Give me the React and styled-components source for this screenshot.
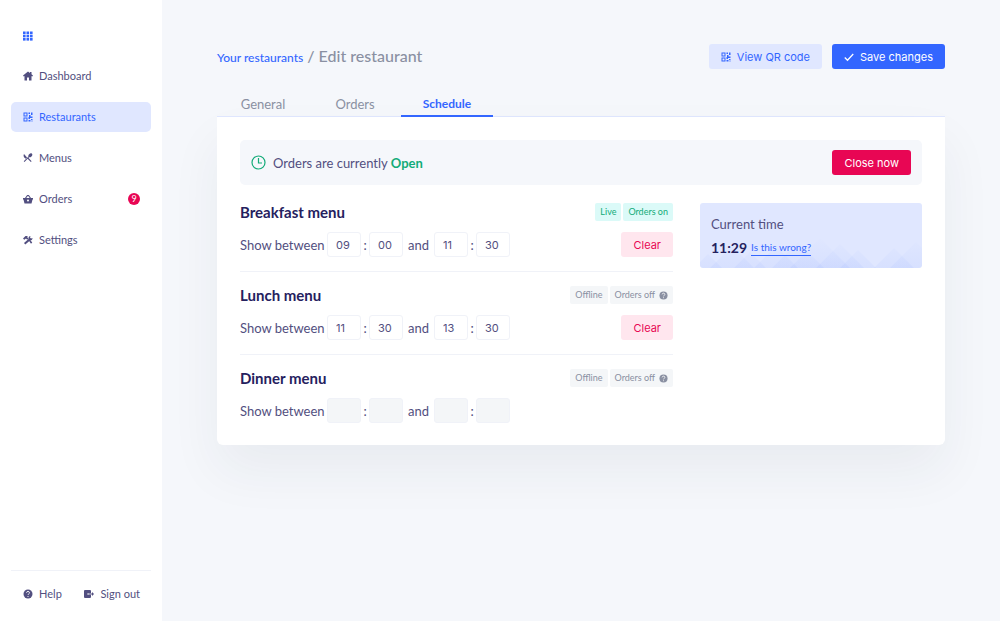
import React, { useState } from "react";
import styled, { createGlobalStyle, css } from "styled-components";

const color = {
  blue: "#3366ff",
  blueSoft: "#e0e7ff",
  ink: "#25215e",
  text: "#524f80",
  grey: "#8a90a2",
  line: "#f0f2f8",
  page: "#f5f7fb",
  red: "#e80654",
  redSoft: "#ffe6ee",
  green: "#12ab78",
  greenSoft: "#dbfaf8",
  off: "#f4f6f8",
};

const body = `Lato, "Noto Sans", sans-serif`;
const ui = `Inter, "Liberation Sans", sans-serif`;

const GlobalStyle = createGlobalStyle`
  *, *::before, *::after { box-sizing: border-box; }
  body { margin: 0; background: ${color.page}; color: ${color.text}; font: 13px/20px ${body}; }
  h1, h2, p { margin: 0; }
  a { color: inherit; text-decoration: none; }
  button, input { font: inherit; color: inherit; margin: 0; }
  svg { display: block; flex: none; }
`;

const Shell = styled.div`
  display: flex;
  min-height: 100vh;
`;

const Sidebar = styled.aside`
  display: flex;
  flex-direction: column;
  flex: none;
  width: 162px;
  padding: 20px 11px 12px;
  background: #fff;
  font-size: 11px;
`;

const NavLink = styled.a`
  display: flex;
  align-items: center;
  gap: 6px;
  height: 30px;
  padding: 0 11px 0 12px;
  border-radius: 5px;
  white-space: nowrap;
  color: ${(p) => (p.$active ? color.blue : color.text)};
  background: ${(p) => (p.$active ? color.blueSoft : "transparent")};
`;

const Logo = styled.a`
  display: flex;
  padding: 11px 12px;
  color: ${color.blue};
`;

const Nav = styled.nav`
  display: flex;
  flex-direction: column;
  gap: 11px;
  margin-top: 9px;
`;

const Count = styled.span`
  margin-left: auto;
  width: 12px;
  height: 12px;
  border-radius: 50%;
  background: ${color.red};
  color: #fff;
  font-size: 9px;
  line-height: 12px;
  text-align: center;
`;

const SideFooter = styled.div`
  display: flex;
  justify-content: space-between;
  margin-top: auto;
  padding-top: 8px;
  border-top: 1px solid ${color.line};

  ${NavLink} + ${NavLink} { padding-left: 0; }
`;

const Main = styled.main`
  flex: 1;
  min-width: 0;
  padding: 44px 55px;
`;

const TopBar = styled.header`
  display: flex;
  align-items: center;
  justify-content: space-between;
`;

const Crumbs = styled.h1`
  font-size: 16px;
  font-weight: 500;
  color: ${color.grey};
`;

const CrumbLink = styled.a`
  font-size: 12px;
  color: ${color.blue};
`;

const Actions = styled.div`
  display: flex;
  gap: 10px;
`;

const tones = {
  primary: css`background: ${color.blue}; color: #fff;`,
  soft: css`background: ${color.blueSoft}; color: ${color.blue};`,
  danger: css`background: ${color.red}; color: #fff;`,
  dangerSoft: css`background: ${color.redSoft}; color: ${color.red};`,
};

const Button = styled.button`
  display: flex;
  align-items: center;
  gap: 6px;
  height: 25px;
  padding: 0 12px;
  border: 0;
  border-radius: 3px;
  font: 11px/16px ${ui};
  white-space: nowrap;
  cursor: pointer;
  ${(p) => tones[p.$tone]}
`;

const Tabs = styled.div`
  display: flex;
  margin-top: 22px;
  border-bottom: 1px solid ${color.blueSoft};
`;

const Tab = styled.button`
  width: 92px;
  height: 26px;
  margin-bottom: -1px;
  padding: 2px 0 0;
  border: 0;
  border-bottom: 2px solid ${(p) => (p.$active ? color.blue : "transparent")};
  background: none;
  color: ${(p) => (p.$active ? color.blue : color.grey)};
  font-size: ${(p) => (p.$active ? 12 : 13)}px;
  font-weight: ${(p) => (p.$active ? 700 : 400)};
  cursor: pointer;
`;

const Card = styled.section`
  padding: 23px 23px 22px;
  background: #fff;
  border-radius: 0 0 6px 6px;
  box-shadow: 0 26px 52px rgba(40, 50, 60, 0.06);
`;

const Notice = styled.div`
  display: flex;
  align-items: center;
  gap: 7px;
  padding: 10px 11px;
  border-radius: 5px;
  background: ${color.page};
  color: ${color.text};

  ${Button} { margin-left: auto; }
`;

const Open = styled.strong`
  color: ${color.green};
`;

const Columns = styled.div`
  display: grid;
  grid-template-columns: minmax(0, 433fr) minmax(0, 222fr);
  gap: 27px;
  align-items: start;
  margin-top: 18px;
`;

const Menu = styled.section`
  & + & {
    margin-top: 14px;
    padding-top: 14px;
    border-top: 1px solid ${color.line};
  }
`;

const Row = styled.div`
  display: flex;
  align-items: center;
  justify-content: space-between;
  & + & { margin-top: 11px; }
`;

const MenuTitle = styled.h2`
  font-size: 15px;
  line-height: 18px;
  font-weight: 700;
  color: ${color.ink};
`;

const Tags = styled.div`
  display: flex;
  gap: 2px;
`;

const Tag = styled.span`
  display: flex;
  align-items: center;
  gap: 4px;
  height: 18px;
  padding: 0 5px;
  border-radius: 2px;
  font-size: 9px;
  background: ${(p) => (p.$on ? color.greenSoft : color.off)};
  color: ${(p) => (p.$on ? color.green : color.grey)};
`;

const Times = styled.div`
  display: flex;
  align-items: center;
  height: 25px;
`;

const Word = styled.span`
  width: ${(p) => p.$width}px;
  text-align: ${(p) => p.$align || "center"};
`;

const TimeInput = styled.input`
  width: 34px;
  height: 25px;
  padding: 0 8px;
  border: 1px solid ${color.line};
  border-radius: 3px;
  background: #fff;
  font: 11px/16px ${ui};
  &:disabled { background: ${color.off}; }
`;

const Clock = styled.aside`
  position: relative;
  height: 65px;
  padding: 11px;
  border-radius: 3px;
  overflow: hidden;
  background: ${color.blueSoft};
`;

const Pattern = styled.svg`
  position: absolute;
  left: 0;
  bottom: 0;
  width: 100%;
  height: 32px;
`;

const ClockRow = styled.div`
  position: relative;
  display: flex;
  align-items: center;
  gap: 4px;
  margin-top: 4px;
`;

const Now = styled.strong`
  font-size: 14px;
  line-height: 20px;
  color: ${color.ink};
`;

const SmallLink = styled.a`
  font-size: 10px;
  line-height: 15px;
  color: ${color.blue};
  border-bottom: 1px solid ${color.blue};
`;

const Svg = ({ size = 10, box = 20, children }) => (
  <svg width={size} height={size} viewBox={`0 0 ${box} ${box}`} fill="currentColor" aria-hidden="true">
    {children}
  </svg>
);

const GridIcon = () => (
  <Svg>
    {[1, 7.5, 14].map((y) => [0, 7, 14].map((x) => <rect key={`${x}-${y}`} x={x} y={y} width="5.200" height="5.200" />))}
  </Svg>
);
const HomeIcon = () => (
  <Svg>
    <path d="M10 1 0 9l1.500 2L3 10v9h5v-6h4v6h5v-9l1.500 1L20 9l-3-2.500V2h-3v2z" />
  </Svg>
);
const QrIcon = () => (
  <Svg>
    <path fillRule="evenodd" d="M1 1h8v8H1zM3 3v4h4V3zM1 11h8v8H1zM3 13v4h4v-4zM11 1h3v3h-3zM16 1h3v5h-3zM12 6h3v3h4v3h-5v2h-3v-4h1zM16 14h3v2h-3zM11 16h4v3h-4zM17 17h2v2h-2z" />
  </Svg>
);
const CutleryIcon = () => (
  <Svg>
    <path d="M2 2c-1.500 3-.8 5.500 1 7.300l2.500 2.200 2.700-2.600z" />
    <path d="m10.800 9.600 1.300-1.200c1.400.6 3.300 0 4.800-1.500 2-2 2.300-4.400 1-5.600s-3.700-1-5.600 1c-1.500 1.500-2 3.400-1.400 4.800L1.500 16.500l1.500 1.600 6.300-6.400 6.400 6.400 1.500-1.600z" />
  </Svg>
);
const BasketIcon = () => (
  <Svg>
    <path fillRule="evenodd" d="M0 8h4l4.300-6h3.400L16 8h4v3h-1l-2 8H3l-2-8H0zm6.500 0h7L10 3.500zM10 11a2 2 0 1 0 0 4 2 2 0 0 0 0-4z" />
  </Svg>
);
const ToolsIcon = () => (
  <Svg>
    <path d="M0 7 5 2h5L8 4l3 3-2.500 2.500L6 7 2.500 9.500z" />
    <path d="m11.500 11 2-2 5 6-2.500 2.500z" />
    <path d="M2 16 11 8c-.5-3 1-5.500 4-6l-1 3 2 2 3-1c0 3-2 5.500-5 5l-9.500 8z" />
  </Svg>
);
const HelpIcon = ({ size = 10 }) => (
  <Svg size={size}>
    <circle cx="10" cy="10" r="9" />
    <path d="M7 7.500C7.200 3.800 13 4 13 7.500c0 2.300-3 2.300-3 4.500M10 14v2" fill="none" stroke="#fff" strokeWidth="1.800" />
  </Svg>
);
const ExitIcon = () => (
  <Svg>
    <path d="M2 2h10a2 2 0 0 1 2 2v4.500H7v3h7V16a2 2 0 0 1-2 2H2a2 2 0 0 1-2-2V4a2 2 0 0 1 2-2z" />
    <path d="M9 9.200h7V6l4 4-4 4v-3.200H9z" />
  </Svg>
);
const CheckIcon = () => (
  <Svg>
    <path d="m1.500 11 5.500 5.500L18.500 4" fill="none" stroke="currentColor" strokeWidth="2.500" />
  </Svg>
);
const ClockIcon = () => (
  <svg width="15" height="15" viewBox="0 0 15 15" fill="none" stroke={color.green} aria-hidden="true">
    <circle cx="7.500" cy="7.500" r="6.500" strokeWidth="1.200" />
    <path d="M7.500 3v5H11" strokeWidth="1.200" />
  </svg>
);

const peaks = [
  { x: 8, h: 14 },
  { x: 32, h: 22 },
  { x: 50, h: 16 },
  { x: 76, h: 22 },
  { x: 98, h: 26 },
  { x: 120, h: 30 },
  { x: 140, h: 24 },
  { x: 158, h: 18 },
  { x: 194, h: 20 },
  { x: 216, h: 26 },
];

const navItems = [
  { label: "Dashboard", Icon: HomeIcon },
  { label: "Restaurants", Icon: QrIcon, active: true },
  { label: "Menus", Icon: CutleryIcon },
  { label: "Orders", Icon: BasketIcon, count: 9 },
  { label: "Settings", Icon: ToolsIcon },
];

const initialMenus = [
  { name: "Breakfast menu", live: true, times: ["09", "00", "11", "30"] },
  { name: "Lunch menu", live: false, times: ["11", "30", "13", "30"] },
  { name: "Dinner menu", live: false, times: null },
];

function MenuSchedule({ menu, onChange }) {
  const field = (index, label) => (
    <TimeInput
      aria-label={`${menu.name} ${label}`}
      value={menu.times ? menu.times[index] : ""}
      disabled={!menu.times}
      maxLength={2}
      onChange={(e) => onChange(menu.times.map((t, i) => (i === index ? e.target.value : t)))}
    />
  );
  return (
    <Menu>
      <Row>
        <MenuTitle>{menu.name}</MenuTitle>
        <Tags>
          <Tag $on={menu.live}>{menu.live ? "Live" : "Offline"}</Tag>
          <Tag $on={menu.live}>
            {menu.live ? "Orders on" : "Orders off"}
            {!menu.live && <HelpIcon size={9} />}
          </Tag>
        </Tags>
      </Row>
      <Row>
        <Times>
          <Word $width={87} $align="left">Show between</Word>
          {field(0, "start hour")}
          <Word $width={8}>:</Word>
          {field(1, "start minute")}
          <Word $width={31}>and</Word>
          {field(2, "end hour")}
          <Word $width={8}>:</Word>
          {field(3, "end minute")}
        </Times>
        {menu.times && (
          <Button type="button" $tone="dangerSoft" onClick={() => onChange(null)}>
            Clear
          </Button>
        )}
      </Row>
    </Menu>
  );
}

export default function App() {
  const [menus, setMenus] = useState(initialMenus);
  const [tab, setTab] = useState("Schedule");
  const update = (name, times) => setMenus(menus.map((m) => (m.name === name ? { ...m, times } : m)));

  return (
    <>
      <GlobalStyle />
      <Shell>
        <Sidebar>
          <Logo href="#" aria-label="Home">
            <GridIcon />
          </Logo>
          <Nav>
            {navItems.map(({ label, Icon, active, count }) => (
              <NavLink key={label} href="#" $active={active}>
                <Icon />
                {label}
                {count && <Count>{count}</Count>}
              </NavLink>
            ))}
          </Nav>
          <SideFooter>
            <NavLink href="#">
              <HelpIcon />
              Help
            </NavLink>
            <NavLink href="#">
              <ExitIcon />
              Sign out
            </NavLink>
          </SideFooter>
        </Sidebar>
        <Main>
          <TopBar>
            <Crumbs>
              <CrumbLink href="#">Your restaurants</CrumbLink> / Edit restaurant
            </Crumbs>
            <Actions>
              <Button type="button" $tone="soft">
                <QrIcon />
                View QR code
              </Button>
              <Button type="button" $tone="primary">
                <CheckIcon />
                Save changes
              </Button>
            </Actions>
          </TopBar>
          <Tabs role="tablist">
            {["General", "Orders", "Schedule"].map((name) => (
              <Tab key={name} type="button" role="tab" aria-selected={tab === name} $active={tab === name} onClick={() => setTab(name)}>
                {name}
              </Tab>
            ))}
          </Tabs>
          <Card>
            <Notice>
              <ClockIcon />
              <p>
                Orders are currently <Open>Open</Open>
              </p>
              <Button type="button" $tone="danger">
                Close now
              </Button>
            </Notice>
            <Columns>
              <div>
                {menus.map((menu) => (
                  <MenuSchedule key={menu.name} menu={menu} onChange={(times) => update(menu.name, times)} />
                ))}
              </div>
              <Clock>
                <Pattern viewBox="0 0 222 32" preserveAspectRatio="none" aria-hidden="true">
                  <defs>
                    <linearGradient id="fade" gradientUnits="userSpaceOnUse" x1="0" y1="0" x2="0" y2="32">
                      <stop offset="0" stopColor={color.blue} stopOpacity="0" />
                      <stop offset="1" stopColor={color.blue} stopOpacity="0.05" />
                    </linearGradient>
                  </defs>
                  {peaks.map(({ x, h }) => (
                    <path key={x} fill="url(#fade)" d={`M${x - h} 32 ${x} ${32 - h}l${h} ${h}z`} />
                  ))}
                </Pattern>
                <p>Current time</p>
                <ClockRow>
                  <Now>11:29</Now>
                  <SmallLink href="#">Is this wrong?</SmallLink>
                </ClockRow>
              </Clock>
            </Columns>
          </Card>
        </Main>
      </Shell>
    </>
  );
}
